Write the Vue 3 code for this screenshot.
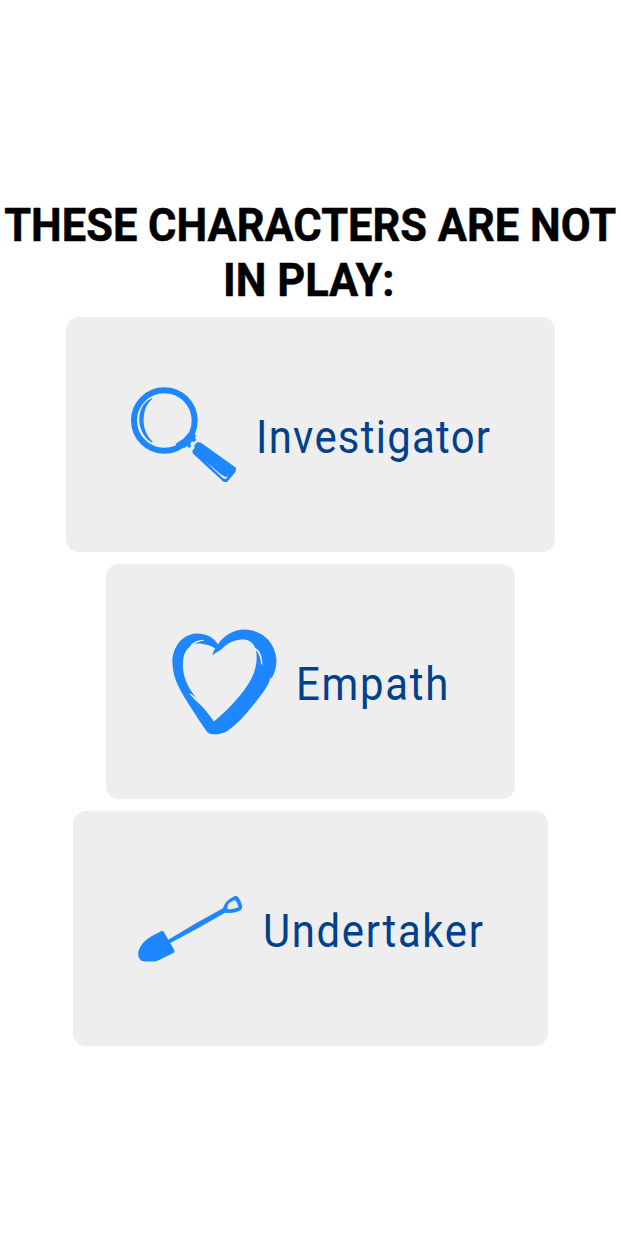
<script setup>
const characters = [
  { name: 'Investigator', icon: 'glass' },
  { name: 'Empath', icon: 'heart' },
  { name: 'Undertaker', icon: 'shovel' },
]
</script>

<template>
  <main class="screen">
    <h1 class="title">
      <span class="line">THESE CHARACTERS ARE NOT</span>
      <span class="line second">IN PLAY:</span>
    </h1>
    <section class="cards">
      <article v-for="c in characters" :key="c.name" class="card" :class="c.icon">
        <svg v-if="c.icon === 'glass'" class="icon" viewBox="0 -16 390 390" aria-hidden="true">
          <circle class="ring" cx="133" cy="135.500" r="91" />
          <path d="M166 206L190 190L208 170L222 166L224 178L229 180L225 186L229 195L222 200L216 198L211 205L213 214L206 218L202 211L195 218L188 213L180 216Z" />
          <path d="M96 68Q64 82 58 122Q55 157 75 184Q85 196 96 202L98 199Q81 183 74 160Q67 133 75 103Q82 83 97 70Z" />
          <path d="M232 200L243 202L348 277L347 289L321 320L311 320L218 234L217 226L224 218L222 211Z" />
          <path class="cut" d="M255 256L302 297L316 305L324 303L317 312L308 308Z" />
        </svg>
        <svg v-else-if="c.icon === 'heart'" class="icon" viewBox="0 4.5 390 390" aria-hidden="true">
          <path fill-rule="evenodd" d="M174 87C161 65 137 53 107 54C67 57 38 93 37 140C39 193 62 226 85 264C105 295 124 326 142 350Q148 356 158 356L174 356Q193 354 207 343Q244 315 276 273Q309 236 333 193Q352 158 349 128C343 77 304 44 255 42C219 42 190 61 174 87ZM158 121C158 111 160 106 166 99C154 91 135 84 113 84C90 87 74 104 70 129C65 161 73 194 91 223C114 258 138 286 162 318C185 298 211 276 234 247C261 215 284 183 289 142C293 103 284 79 257 73C231 69 205 80 186 100C177 110 163 111 158 121Z" />
          <path class="cut" d="M90 93Q103 73 131 73L131 76Q112 77 93 94ZM267 94Q288 94 298 108Q307 123 307 147L303 146Q302 120 289 106Q280 98 267 97ZM90 234L97 238Q138 273 166 297L163 299Q124 276 90 237ZM334 186L330 190Q327 205 320 217L323 220Q333 206 336 188Z" />
        </svg>
        <svg v-else class="icon" viewBox="6 -48 390 390" aria-hidden="true">
          <path d="M110 153L115 153L130 179L210 131L294 85Q300 65 315 56L329 48L337 49Q347 59 352 80Q352 87 344 92Q326 101 300 98L221 143L136 189L149 213L147 218L96 243Q77 246 50 243Q37 234 40 216Q44 198 62 181Q76 169 110 153Z" />
          <path class="cut" d="M330 60Q338 68 341 82Q326 89 307 87Q306 72 317 66Z" />
        </svg>
        <span class="label">{{ c.name }}</span>
      </article>
    </section>
  </main>
</template>

<style>
body {
  background: #fff;
}
</style>

<style scoped>
.screen {
  box-sizing: border-box;
  height: 1242px;
  padding-top: 198px;
  overflow: hidden;
  font-family: Roboto, "Liberation Sans", sans-serif;
}
.title {
  display: flex;
  flex-direction: column;
  align-items: center;
  margin: 0 0 10px;
  font-size: 46px;
  line-height: 54.5px;
  font-weight: 700;
  color: #000;
  -webkit-text-stroke: 0.5px #000;
}
.line {
  white-space: nowrap;
  transform: scaleX(0.944);
}
.second {
  margin-right: 3px;
}
.cards {
  display: flex;
  flex-direction: column;
  align-items: center;
  gap: 12px;
}
.card {
  box-sizing: border-box;
  display: flex;
  align-items: center;
  height: 235px;
  padding-left: 54px;
  border-radius: 13px;
  background: #eee;
}
.glass {
  width: 489px;
}
.heart {
  width: 409px;
}
.shovel {
  width: 475px;
}
.icon {
  flex: none;
  width: 130px;
  height: 130px;
  fill: #1e87ff;
}
.ring {
  fill: none;
  stroke: #1e87ff;
  stroke-width: 18px;
}
.cut {
  fill: #eee;
}
.label {
  margin: 6px 0 0 5.5px;
  white-space: nowrap;
  font-size: 45.5px;
  line-height: 54px;
  color: #00408c;
  letter-spacing: 1.6px;
  transform: scaleX(0.92);
  transform-origin: left center;
}
.glass .label {
  letter-spacing: 1.4px;
}
.heart .label {
  letter-spacing: 1.9px;
}
.shovel .label {
  letter-spacing: 1.8px;
}
</style>
